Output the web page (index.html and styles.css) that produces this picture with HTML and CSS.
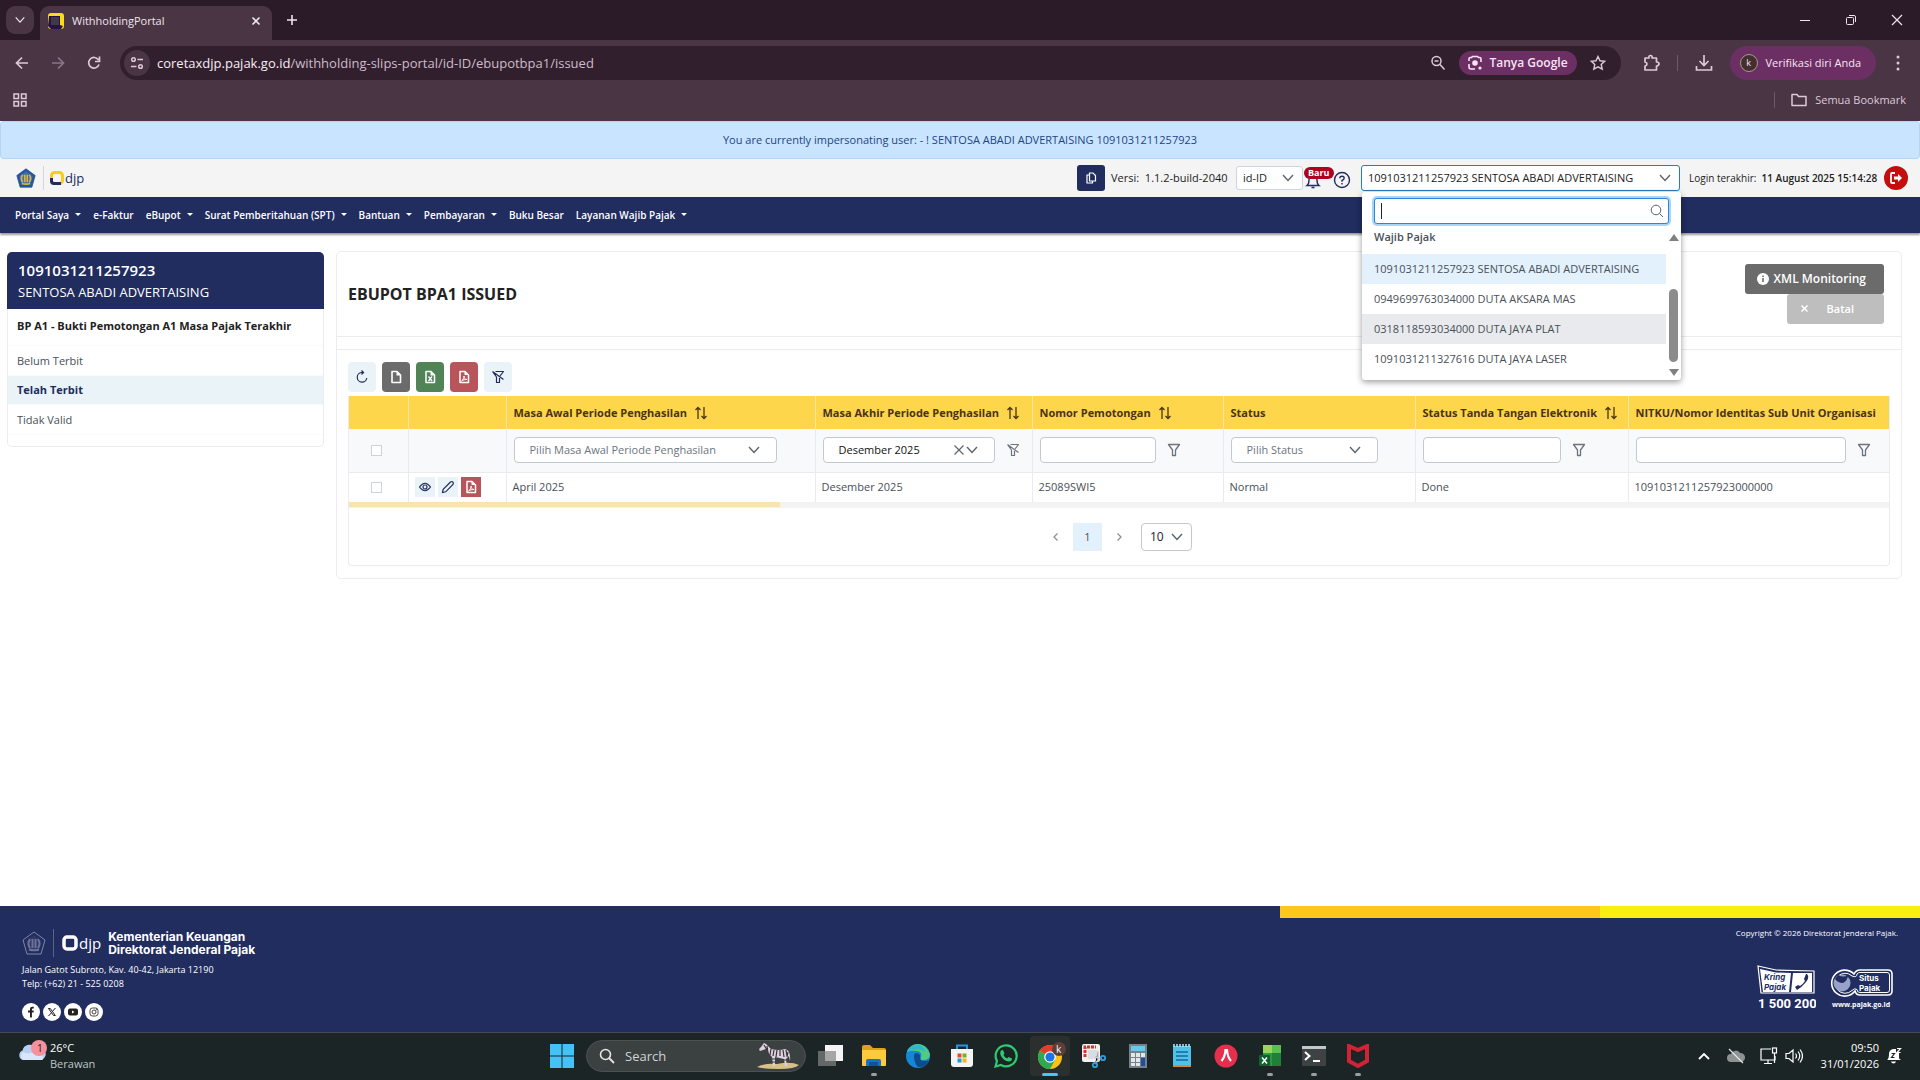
FILE: index.html
```html
<!DOCTYPE html>
<html lang="id">
<head>
    <meta charset="UTF-8">
    <meta name="viewport" content="width=device-width, initial-scale=1.0">
    <title>WithholdingPortal</title>
    <link rel="stylesheet" href="styles.css">
</head>
<body>
    <!-- shared icons -->
    <svg class="sprite" aria-hidden="true">
        <symbol id="chevron" viewBox="0 0 14 14"><path d="M2 4l5 5.500 5-5.500" fill="none" stroke="currentColor" stroke-width="1.400"/></symbol>
        <symbol id="funnel" viewBox="0 0 14 14"><path d="M1.500 1.500h11L8.500 7v5.500h-3V7z" fill="none" stroke="currentColor" stroke-width="1.300" stroke-linejoin="round"/></symbol>
        <symbol id="funnel-slash" viewBox="0 0 14 14"><path d="M4.500 1.500h8L9 6M1.500 1.500L5.500 7v5.500h3V8M1.500 1.500l11 8" fill="none" stroke="currentColor" stroke-width="1.200" stroke-linejoin="round"/></symbol>
        <symbol id="sort" viewBox="0 0 14 14"><path d="M4 13V1.500M1.500 4L4 1.500 6.500 4M10 1v11.500M7.500 10l2.500 2.500 2.500-2.500" fill="none" stroke="currentColor" stroke-width="1.300"/></symbol>
        <symbol id="file" viewBox="0 0 14 14"><path d="M3 1.500h5l3.500 3.500v7.500H3z" fill="none" stroke="currentColor" stroke-width="1.600" stroke-linejoin="round"/><path d="M7.500 1.500V5.500h4z" fill="currentColor"/></symbol>
        <symbol id="file-excel" viewBox="0 0 14 14"><path d="M3 1.500h5l3.500 3.500v7.500H3z" fill="none" stroke="currentColor" stroke-width="1.500" stroke-linejoin="round"/><path d="M7.500 1.500V5.500h4z" fill="currentColor"/><path d="M5.500 6.500l3.500 4.500M9 6.500L5.500 11" stroke="currentColor" stroke-width="1.300"/></symbol>
        <symbol id="file-pdf" viewBox="0 0 14 14"><path d="M3 1.500h5l3.500 3.500v7.500H3z" fill="none" stroke="currentColor" stroke-width="1.500" stroke-linejoin="round"/><path d="M7.500 1.500V5h4z" fill="currentColor"/><path d="M4.500 11c2-1.500 2.500-3 2.500-5 0 2 1 3.500 3 3.500-2 0-4 .3-5.500 1.500z" fill="none" stroke="currentColor"/></symbol>
        <symbol id="pentagon" viewBox="0 0 24 24"><path d="M12 1l11 8-4 14H5L1 9z" class="pent-a"/><path d="M12 4l8 6-3 10H7L4 10z" class="pent-b"/><path d="M8 8q-3 5 0 9M10.500 8v9M13.500 8v9M16 8q3 5 0 9M7 18.500c3 1 7 1 10 0" class="pent-c"/></symbol>
    </svg>

    <div class="browser">
        <div class="tabs">
            <button class="tab-search" aria-label="Cari tab"><svg width="12" height="12"><use href="#chevron"/></svg></button>
            <div class="tab">
                <svg class="favicon" width="16" height="16" viewBox="0 0 16 16"><rect width="16" height="16" rx="3" fill="#f8dc18"/><path d="M1 3h11v9l3 1-2 3H3l-3-3z" fill="#24124a"/><rect x="3" y="4" width="8" height="8" fill="#42384a"/></svg>
                <span class="tab-title">WithholdingPortal</span>
                <button class="plain" aria-label="Tutup tab"><svg width="10" height="10" viewBox="0 0 10 10"><path d="M1.500 1.500l7 7M8.500 1.500l-7 7" stroke="currentColor" stroke-width="1.600"/></svg></button>
            </div>
            <button class="plain new-tab" aria-label="Tab baru"><svg width="12" height="12" viewBox="0 0 12 12"><path d="M6 1v10M1 6h10" stroke="currentColor" stroke-width="1.600"/></svg></button>
            <div class="window-buttons">
                <button class="plain" aria-label="Minimize"><svg width="12" height="12" viewBox="0 0 12 12"><path d="M1 6.500h10" stroke="currentColor"/></svg></button>
                <button class="plain" aria-label="Restore"><svg width="12" height="12" viewBox="0 0 12 12" fill="none" stroke="currentColor"><rect x="1.500" y="3.500" width="7" height="7" rx="1"/><path d="M4 1.500h5q1.500 0 1.500 1.500v5"/></svg></button>
                <button class="plain" aria-label="Close"><svg width="12" height="12" viewBox="0 0 12 12"><path d="M1 1l10 10M11 1L1 11" stroke="currentColor" stroke-width="1.200"/></svg></button>
            </div>
        </div>
        <div class="toolbar">
            <button class="plain" aria-label="Kembali"><svg width="16" height="16" viewBox="0 0 16 16"><path d="M14 8H3M8 2.500L2.500 8 8 13.500" fill="none" stroke="currentColor" stroke-width="1.700"/></svg></button>
            <button class="plain dim" aria-label="Maju"><svg width="16" height="16" viewBox="0 0 16 16"><path d="M2 8h11M8 2.500L13.500 8 8 13.500" fill="none" stroke="currentColor" stroke-width="1.700"/></svg></button>
            <button class="plain" aria-label="Muat ulang"><svg width="16" height="16" viewBox="0 0 16 16"><path d="M13 9.500A5.300 5.300 0 1 1 12.500 5M13.500 1.500v5H9" fill="none" stroke="currentColor" stroke-width="1.700"/></svg></button>
            <div class="omnibox">
                <span class="site-info"><svg width="14" height="14" viewBox="0 0 14 14" fill="none" stroke="currentColor" stroke-width="1.500"><circle cx="3.500" cy="3.500" r="1.800"/><path d="M7.500 3.500H13M1 10.500h5.500"/><circle cx="10.500" cy="10.500" r="1.800"/></svg></span>
                <span class="url">coretaxdjp.pajak.go.id<span class="url-path">/withholding-slips-portal/id-ID/ebupotbpa1/issued</span></span>
                <svg width="16" height="16" viewBox="0 0 16 16" fill="none" stroke="currentColor" stroke-width="1.500"><circle cx="6.500" cy="6" r="4.500"/><path d="M4.500 6h4M10 9.500l4.500 5"/></svg>
                <button class="ask"><svg width="16" height="16" viewBox="0 0 16 16" fill="none" stroke="currentColor" stroke-width="1.600"><path d="M2 6V4q0-1.500 1.500-1.500h1l1-1h5l1 1h1Q14 2.500 14 4v3M2 9v3q0 2 2 2h4"/><circle cx="8" cy="8" r="2" fill="currentColor"/><circle cx="13" cy="13" r=".8" fill="currentColor"/></svg>Tanya Google</button>
                <svg width="16" height="16" viewBox="0 0 16 16"><path d="M8 1.500l2 4.300 4.700.5-3.500 3.200 1 4.700L8 11.800l-4.200 2.400 1-4.700L1.300 6.300l4.700-.5z" fill="none" stroke="currentColor" stroke-width="1.400"/></svg>
            </div>
            <svg class="ext" width="18" height="18" viewBox="0 0 18 18"><path d="M3 4h4q-.5-2.500 1.500-2.500T10 4h4.500v4q2.500 0 2.500 1.800T14.500 12v4H3v-4q2-.5 2-2t-2-2z" fill="none" stroke="currentColor" stroke-width="1.700" stroke-linejoin="round"/></svg>
            <span class="divider"></span>
            <svg class="download" width="18" height="18" viewBox="0 0 18 18"><path d="M9 1v10M4.500 7L9 11.500 13.500 7M1.500 12v4h15v-4" fill="none" stroke="currentColor" stroke-width="1.700"/></svg>
            <button class="profile"><span class="avatar">k</span>Verifikasi diri Anda</button>
            <svg class="dots" width="4" height="16" viewBox="0 0 4 16" fill="currentColor"><circle cx="2" cy="2" r="1.500"/><circle cx="2" cy="8" r="1.500"/><circle cx="2" cy="14" r="1.500"/></svg>
        </div>
        <div class="bookmarks">
            <svg width="14" height="14" viewBox="0 0 14 14" fill="none" stroke="currentColor" stroke-width="1.500"><path d="M1 1h4.500v4.500H1zM8.500 1H13v4.500H8.500zM1 8.500h4.500V13H1zM8.500 8.500H13V13H8.500z"/></svg>
            <span class="divider"></span>
            <svg width="16" height="14" viewBox="0 0 16 14"><path d="M1 1.500h5l1.500 2H15v9H1z" fill="none" stroke="currentColor" stroke-width="1.500" stroke-linejoin="round"/></svg>
            <span>Semua Bookmark</span>
        </div>
    </div>

    <div class="notice">You are currently impersonating user: - ! SENTOSA ABADI ADVERTAISING 1091031211257923</div>

    <header class="topbar">
        <svg class="crest" width="20" height="20"><use href="#pentagon"/></svg>
        <span class="logo">
            <svg width="14" height="14" viewBox="0 0 14 14"><rect x="1.500" y="1.500" width="11" height="11" rx="3" fill="none" stroke="#f6cf1c" stroke-width="3"/><path d="M1.500 7v3q0 2.500 2.500 2.500h7" fill="none" stroke="#212c5f" stroke-width="3"/></svg>djp
        </span>
        <button class="copy" aria-label="Salin versi"><svg width="12" height="12" viewBox="0 0 12 12" fill="none" stroke="currentColor" stroke-width="1.200"><path d="M4.500 1h3.500L10.500 3.500V9h-6zM4 3H2v8h5.500V9"/></svg></button>
        <span class="version">Versi:&nbsp; 1.1.2-build-2040</span>
        <span class="select-box lang">
            <select aria-label="Bahasa"><option>id-ID</option></select>
            <svg width="14" height="14"><use href="#chevron"/></svg>
        </span>
        <span class="bell">
            <svg width="16" height="16" viewBox="0 0 16 16"><path d="M2 12.500q2-1.500 2-5.500 0-3.500 4-3.500t4 3.500q0 4 2 5.500zM6.500 14.500h3" fill="none" stroke="#212c5f" stroke-width="1.400"/></svg>
            <b class="badge">Baru</b>
        </span>
        <svg class="help" width="18" height="18" viewBox="0 0 18 18"><circle cx="9" cy="9" r="7.500" fill="none" stroke="#212c5f" stroke-width="1.400"/><path d="M6.800 7.300q0-2.100 2.200-2.100t2.200 1.900Q11.200 8.500 9 9.500v1.200M9 12v1.500" fill="none" stroke="#212c5f" stroke-width="1.400"/></svg>
        <div class="taxpayer">
            <span class="select-box">
                <select aria-label="Wajib Pajak"><option>1091031211257923 SENTOSA ABADI ADVERTAISING</option></select>
                <svg width="14" height="14"><use href="#chevron"/></svg>
            </span>
            <div class="panel">
                <div class="panel-search">
                    <input type="text" aria-label="Cari wajib pajak">
                    <span class="caret"></span>
                    <svg width="14" height="14" viewBox="0 0 14 14"><circle cx="6" cy="6" r="4.800" fill="none" stroke="currentColor"/><path d="M9.500 9.500L13 13" stroke="currentColor"/></svg>
                </div>
                <div class="panel-body">
                    <ul>
                        <li class="group">Wajib Pajak</li>
                        <li class="selected">1091031211257923 SENTOSA ABADI ADVERTAISING</li>
                        <li>0949699763034000 DUTA AKSARA MAS</li>
                        <li class="hover">0318118593034000 DUTA JAYA PLAT</li>
                        <li>1091031211327616 DUTA JAYA LASER</li>
                    </ul>
                    <div class="scroller">
                        <i class="arrow-up"></i>
                        <i class="thumb"></i>
                        <i class="arrow-down"></i>
                    </div>
                </div>
            </div>
        </div>
        <span class="last-login">Login terakhir:&nbsp; <b>11 August 2025 15:14:28</b></span>
        <button class="logout" aria-label="Keluar"><svg width="14" height="14" viewBox="0 0 14 14"><path d="M6 2H3q-1 0-1 1v8q0 1 1 1h3" fill="none" stroke="#fff" stroke-width="1.800"/><path d="M5 5.500h4V3l4 4-4 4V8.500H5z" fill="#fff"/></svg></button>
    </header>

    <nav class="menu">
        <a href="#" class="more">Portal Saya</a>
        <a href="#">e-Faktur</a>
        <a href="#" class="more">eBupot</a>
        <a href="#" class="more">Surat Pemberitahuan (SPT)</a>
        <a href="#" class="more">Bantuan</a>
        <a href="#" class="more">Pembayaran</a>
        <a href="#">Buku Besar</a>
        <a href="#" class="more">Layanan Wajib Pajak</a>
    </nav>

    <main>
        <aside>
            <div class="who">
                <b>1091031211257923</b>
                <span>SENTOSA ABADI ADVERTAISING</span>
            </div>
            <h2>BP A1 - Bukti Pemotongan A1 Masa Pajak Terakhir</h2>
            <div class="side-links">
                <a href="#">Belum Terbit</a>
                <a href="#" class="active">Telah Terbit</a>
                <a href="#">Tidak Valid</a>
            </div>
        </aside>

        <section class="card">
            <div class="card-head">
                <h1>EBUPOT BPA1 ISSUED</h1>
                <div class="actions">
                    <button class="btn"><svg width="12" height="12" viewBox="0 0 12 12"><circle cx="6" cy="6" r="6" fill="#fff"/><path d="M6 2.500v1.500M6 5v4" stroke="#6b6b6b" stroke-width="1.600"/></svg>XML Monitoring</button>
                    <button class="btn cancel" disabled><svg width="12" height="12" viewBox="0 0 12 12"><path d="M2.500 2.500l6 6M8.500 2.500l-6 6" stroke="#fff" stroke-width="1.600"/></svg>Batal</button>
                </div>
            </div>
            <div class="card-body">
                <div class="tools">
                    <button class="tool" aria-label="Muat ulang"><svg width="14" height="14" viewBox="0 0 14 14"><path d="M8 2.500H6.500A4.800 4.800 0 1 0 11.800 8M6.500.5l2 2-2 2" fill="none" stroke="currentColor" stroke-width="1.200"/></svg></button>
                    <button class="tool gray" aria-label="Ekspor"><svg width="14" height="14"><use href="#file"/></svg></button>
                    <button class="tool green" aria-label="Ekspor Excel"><svg width="14" height="14"><use href="#file-excel"/></svg></button>
                    <button class="tool red" aria-label="Ekspor PDF"><svg width="14" height="14"><use href="#file-pdf"/></svg></button>
                    <button class="tool" aria-label="Hapus filter"><svg width="14" height="14"><use href="#funnel-slash"/></svg></button>
                </div>
                <div class="grid">
                    <table>
                        <colgroup>
                            <col class="c-check"><col class="c-action"><col class="c-start"><col class="c-end"><col class="c-number"><col class="c-status"><col class="c-sign"><col>
                        </colgroup>
                        <thead>
                            <tr class="titles">
                                <th></th>
                                <th></th>
                                <th>Masa Awal Periode Penghasilan<svg width="14" height="14"><use href="#sort"/></svg></th>
                                <th>Masa Akhir Periode Penghasilan<svg width="14" height="14"><use href="#sort"/></svg></th>
                                <th>Nomor Pemotongan<svg width="14" height="14"><use href="#sort"/></svg></th>
                                <th>Status</th>
                                <th>Status Tanda Tangan Elektronik<svg width="14" height="14"><use href="#sort"/></svg></th>
                                <th>NITKU/Nomor Identitas Sub Unit Organisasi</th>
                            </tr>
                            <tr class="filters">
                                <td class="check"><input type="checkbox" aria-label="Pilih semua"></td>
                                <td></td>
                                <td><div class="filter"><span class="select-box w-start"><select aria-label="Masa awal"><option>Pilih Masa Awal Periode Penghasilan</option></select><svg width="14" height="14"><use href="#chevron"/></svg></span></div></td>
                                <td><div class="filter"><span class="select-box w-end filled"><select aria-label="Masa akhir"><option>Desember 2025</option></select><svg class="clear" width="12" height="12" viewBox="0 0 12 12"><path d="M1.500 1.500l9 9M10.500 1.500l-9 9" stroke="currentColor" stroke-width="1.200"/></svg><svg width="14" height="14"><use href="#chevron"/></svg></span><svg width="14" height="14"><use href="#funnel-slash"/></svg></div></td>
                                <td><div class="filter"><input type="text" class="w-number" aria-label="Nomor pemotongan"><svg width="14" height="14"><use href="#funnel"/></svg></div></td>
                                <td><div class="filter"><span class="select-box w-status"><select aria-label="Status"><option>Pilih Status</option></select><svg width="14" height="14"><use href="#chevron"/></svg></span></div></td>
                                <td><div class="filter"><input type="text" class="w-sign" aria-label="Status tanda tangan"><svg width="14" height="14"><use href="#funnel"/></svg></div></td>
                                <td><div class="filter"><input type="text" class="w-nitku" aria-label="NITKU"><svg width="14" height="14"><use href="#funnel"/></svg></div></td>
                            </tr>
                        </thead>
                        <tbody>
                            <tr>
                                <td class="check"><input type="checkbox" aria-label="Pilih baris"></td>
                                <td>
                                    <div class="row-tools">
                                        <button aria-label="Lihat"><svg width="14" height="14" viewBox="0 0 14 14" fill="none" stroke="currentColor" stroke-width="1.200"><path d="M1.500 7Q7-.5 12.500 7 7 14.500 1.500 7z"/><circle cx="7" cy="7" r="2"/></svg></button>
                                        <button aria-label="Ubah"><svg width="14" height="14" viewBox="0 0 14 14"><path d="M1.500 12.500l.7-3.200L9.500 2q1.300-1 2.300 0t.2 2.500l-7.300 7.300z" fill="none" stroke="currentColor" stroke-width="1.200"/></svg></button>
                                        <button class="red" aria-label="PDF"><svg width="14" height="14"><use href="#file-pdf"/></svg></button>
                                    </div>
                                </td>
                                <td>April 2025</td>
                                <td>Desember 2025</td>
                                <td>25089SWI5</td>
                                <td>Normal</td>
                                <td>Done</td>
                                <td>1091031211257923000000</td>
                            </tr>
                        </tbody>
                    </table>
                    <div class="hscroll"><i></i></div>
                    <div class="pager">
                        <button class="plain" aria-label="Sebelumnya"><svg width="8" height="10" viewBox="0 0 8 10"><path d="M5.500 1.500L2 5l3.500 3.500" fill="none" stroke="currentColor" stroke-width="1.300"/></svg></button>
                        <button class="page">1</button>
                        <button class="plain" aria-label="Berikutnya"><svg width="8" height="10" viewBox="0 0 8 10"><path d="M2.500 1.500L6 5 2.500 8.500" fill="none" stroke="currentColor" stroke-width="1.300"/></svg></button>
                        <span class="select-box size"><select aria-label="Baris per halaman"><option>10</option></select><svg width="14" height="14"><use href="#chevron"/></svg></span>
                    </div>
                </div>
            </div>
        </section>
    </main>

    <footer>
        <div class="stripe"><i></i><i></i></div>
        <div class="foot">
            <div class="office">
                <div class="foot-brand">
                    <svg class="crest" width="24" height="24"><use href="#pentagon"/></svg>
                    <span class="logo">
                        <svg width="16" height="16" viewBox="0 0 16 16"><rect x="2" y="2" width="12" height="12" rx="3" fill="none" stroke="#fff" stroke-width="3.500"/></svg>djp
                    </span>
                    <b>Kementerian Keuangan<br>Direktorat Jenderal Pajak</b>
                </div>
                <p>Jalan Gatot Subroto, Kav. 40-42, Jakarta 12190<br>Telp: (+62) 21 - 525 0208</p>
                <div class="social">
                    <a href="#" aria-label="Facebook"><svg width="18" height="18" viewBox="0 0 18 18"><path d="M8 14.500V9.500H6V7.500h2V6q0-2.300 2.300-2.300h1.500v1.900h-1q-.9 0-.9.900v1h1.900l-.4 2h-1.500v5z" fill="#222"/></svg></a>
                    <a href="#" aria-label="X"><svg width="18" height="18" viewBox="0 0 18 18"><path d="M5.500 5.500h1.800l5 7h-1.800zM12.500 5l-3.100 3.500M8.500 9.700L5.500 13" fill="none" stroke="#222"/></svg></a>
                    <a href="#" aria-label="YouTube"><svg width="18" height="18" viewBox="0 0 18 18"><rect x="4" y="5.500" width="10" height="7" rx="2" fill="#222"/><path d="M8 7.500v3l2.500-1.500z" fill="#fff"/></svg></a>
                    <a href="#" aria-label="Instagram"><svg width="18" height="18" viewBox="0 0 18 18" fill="none" stroke="#444"><rect x="5" y="5" width="8" height="8" rx="2.500"/><circle cx="9" cy="9" r="2"/><circle cx="11.300" cy="6.700" r=".3"/></svg></a>
                </div>
            </div>
            <div class="legal">
                <p>Copyright © 2026 Direktorat Jenderal Pajak.</p>
                <div class="seals">
                    <svg width="60" height="46" viewBox="0 0 60 46">
                        <path d="M2 1l18 4 38 1v22H5z" fill="none" stroke="#fff" stroke-width="1.200"/>
                        <path d="M4 4l16 3.500 15 .5-2 19H7z" fill="#fff"/>
                        <path d="M37 8h19v19H35z" fill="#fff"/>
                        <path d="M51 9q3 3-1 8t-9 8l-2-3 3-2 2 1q3-2 5-5l-1-2 2-5z" fill="#212c5f"/>
                        <text x="8" y="15" class="seal-name dark">Kring</text>
                        <text x="8" y="25" class="seal-name dark">Pajak</text>
                        <text x="2" y="43" class="seal-number">1 500 200</text>
                    </svg>
                    <svg width="66" height="46" viewBox="0 0 66 46">
                        <path d="M26 9q2-4 6-4h28q4 0 4 4v17q0 4-4 4H32q-4 0-5-4a13 13 0 1 1-1-17z" fill="none" stroke="#fff" stroke-width="1.600"/>
                        <path d="M24 11q5 2 5-2 1-1.500 3-1.500h27q2.500 0 2.500 2.500v15q0 2.500-2.500 2.500H32q-3 0-3-3-2-2-5 1A10 10 0 1 1 24 11z" fill="none" stroke="#fff"/>
                        <circle cx="14" cy="18" r="8.500" fill="#98a2c8"/>
                        <path d="M10 10q6 3 10 0 0 5-5 8-5 0-8-4z" fill="#212c5f"/>
                        <text x="31" y="16" class="seal-name">Situs</text>
                        <text x="31" y="26" class="seal-name">Pajak</text>
                        <text x="4" y="42" class="seal-site">www.pajak.go.id</text>
                    </svg>
                </div>
            </div>
        </div>
    </footer>

    <div class="taskbar">
        <div class="weather">
            <svg width="32" height="26" viewBox="0 0 32 26"><path d="M5 20a5 5 0 0 1-.5-9.500A7.500 7.500 0 0 1 18 8a6 6 0 0 1 6 12z" fill="#b9cff2"/><path d="M5 20a5 5 0 0 1 0-8q4 2 8 1t11 2q2 3 0 5z" fill="#d9e5fa"/><circle cx="21" cy="8" r="8" fill="#f5909c"/><text x="19" y="12" class="count">1</text></svg>
            <div class="temp"><span>26°C</span><span class="cond">Berawan</span></div>
        </div>
        <div class="apps">
            <button class="app" aria-label="Start"><svg width="24" height="24" viewBox="0 0 24 24" fill="#44c2f8"><path d="M0 0h11.500v11.500H0zM12.500 0H24v11.500H12.500zM0 12.500h11.500V24H0zM12.500 12.500H24V24H12.500z"/></svg></button>
            <label class="search">
                <svg width="16" height="16" viewBox="0 0 16 16"><circle cx="6.500" cy="6.500" r="5" fill="none" stroke="#e6e6e6" stroke-width="1.600"/><path d="M10 10l5 5" stroke="#e6e6e6" stroke-width="1.800"/></svg>
                <input type="text" placeholder="Search" aria-label="Search">
                <svg width="44" height="28" viewBox="0 0 44 28"><path d="M1 25q8-4 20-3 14-3 22 1-4 4-20 4-16 0-22-2z" fill="#d8c08c"/><path d="M4 9q-2-2 1-4l3-4 2 1 5 5q8 2 14 0 6 1 5 12l-1-5-3 3 1 7h-2l-1-7-9-2v9h-2l-1-9q-3-3-6-8l-3 1z" fill="#ddd3dc"/><path d="M8 3l3 5M11 4l1 7M15 7l-1 6M18 8l-1 6M21 8l-1 7M24 8v6M27 8l1 7M30 8l1 6M32 10l-1 5M16 17h3M16 20h3M28 18h3" stroke="#3b2e3c" stroke-width="1.200"/></svg>
            </label>
            <button class="app" aria-label="Task view"><svg width="26" height="24" viewBox="0 0 26 24"><rect x="8" y="1" width="18" height="16" fill="#f4f4f4"/><rect x="1" y="7" width="18" height="15" fill="#6d7070" opacity=".9"/><rect x="8" y="7" width="11" height="10" fill="#a5a7a7"/></svg></button>
            <button class="app running" aria-label="Explorer"><svg width="24" height="24" viewBox="0 0 24 24"><path d="M0 3q0-2 2-2h6l3 3h11q2 0 2 2v16H0z" fill="#e0a01e"/><path d="M0 6h24v14q0 2-2 2H2q-2 0-2-2z" fill="#fcca3c"/><path d="M4 22v-5q0-2 2-2h11q2 0 2 2v5z" fill="#1673c8"/><path d="M7 18h9v4H7z" fill="#0e549c"/></svg></button>
            <button class="app" aria-label="Edge"><svg width="24" height="24" viewBox="0 0 24 24"><circle cx="12" cy="12" r="12" fill="#1687d4"/><path d="M1 8Q4 0 12 0t12 10q0 6-7 6-3 0-2-2 2-6-4-7Q5 6 1 8z" fill="#4fcb83"/><path d="M1 8Q4 1 11 1t8 7q-6-4-11-2Q4 6 1 8z" fill="#33b5cf"/><path d="M8 12q0-3 3-3 4 1 3 5 0 3 4 3t5-1q-3 8-11 7-4-4-4-11z" fill="#0d4b8c"/></svg></button>
            <button class="app" aria-label="Store"><svg width="24" height="24" viewBox="0 0 24 24"><path d="M7 6V1.500h10V6" fill="none" stroke="#2794e0" stroke-width="2"/><path d="M1 5h22v15q0 3-3 3H4q-3 0-3-3z" fill="#f4f4f4"/><path d="M7.500 9.500h4v4h-4z" fill="#e04e28"/><path d="M12.500 9.500h4v4h-4z" fill="#7aaf2a"/><path d="M7.500 14.500h4v4h-4z" fill="#1e9be0"/><path d="M12.500 14.500h4v4h-4z" fill="#f3b41f"/></svg></button>
            <button class="app" aria-label="WhatsApp"><svg width="24" height="24" viewBox="0 0 24 24"><path d="M1.500 22.500l1.500-5.500a10.500 10.500 0 1 1 4 4z" fill="none" stroke="#2ecb70" stroke-width="2.200"/><path d="M7 6.500l2-.5 1.500 3.500-1 1.500q1 2.500 3.500 3.500l1.500-1.500 3.500 1.500q0 3-3 3-4 0-7-4-3-4-1-7z" fill="#2ecb70"/></svg></button>
            <button class="app running focused" aria-label="Chrome"><svg width="36" height="28" viewBox="-6 0 36 28"><circle cx="12" cy="15" r="12" fill="#fbc116"/><path d="M12 15L1.600 9A12 12 0 0 1 22.400 9z" fill="#e33b2e"/><path d="M12 15L1.600 9A12 12 0 0 0 12 27l5-9z" fill="#2da94f"/><circle cx="12" cy="15" r="5.800" fill="#fff"/><circle cx="12" cy="15" r="4.600" fill="#1a73e8"/><circle cx="21" cy="7" r="7" fill="#5b3f38"/><text x="18" y="11" class="count light">k</text></svg></button>
            <button class="app" aria-label="Snipping tool"><svg width="26" height="26" viewBox="0 0 26 26"><rect x="1" y="1" width="18" height="18" rx="2" fill="#f3f0f0"/><path d="M4 14V4h11" fill="none" stroke="#c83c2c" stroke-width="3" stroke-dasharray="3 1"/><rect x="7" y="7" width="9" height="9" fill="#d8dde4"/><path d="M17 8v9l-3 4M14 14l7 2" stroke="#c6cbd2" stroke-width="1.500"/><circle cx="14" cy="22" r="2.200" fill="none" stroke="#2da0dc" stroke-width="1.800"/><circle cx="22" cy="15" r="2.200" fill="none" stroke="#2da0dc" stroke-width="1.800"/></svg></button>
            <button class="app" aria-label="Calculator"><svg width="18" height="24" viewBox="0 0 18 24"><rect width="18" height="24" fill="#77818c"/><path d="M2 2h14v5H2z" fill="#62c9f0"/><path d="M2 9h4v4H2zM7 9h4v4H7zM12 9h4v4h-4zM2 14h4v4H2zM7 14h4v4H7zM2 19h4v3H2zM7 19h4v3H7z" fill="#e4e6e8"/><path d="M12 14h4v8h-4z" fill="#1f4e9c"/></svg></button>
            <button class="app" aria-label="Notepad"><svg width="20" height="24" viewBox="0 0 20 24"><path d="M1 2h18v20H1z" fill="#50c2ea"/><path d="M2 0v3M5 0v3M8 0v3M11 0v3M14 0v3M17 0v3" stroke="#b8e6f8" stroke-width="1.500"/><path d="M4 8h12M4 12h12M4 16h12" stroke="#17679c" stroke-width="1.600"/><path d="M1 22h18" stroke="#d58a3a" stroke-width="2"/></svg></button>
            <button class="app" aria-label="Anydesk"><svg width="24" height="24" viewBox="0 0 24 24"><circle cx="12" cy="12" r="11.500" fill="#e52f4c"/><path d="M7.500 17Q11 13 11.500 6h1.500q.5 7 4 11" fill="none" stroke="#fff" stroke-width="2.200"/></svg></button>
            <button class="app running" aria-label="Excel"><svg width="22" height="24" viewBox="0 0 22 24"><path d="M4 1h18v21H4z" fill="#2c9a44"/><path d="M4 1h9v8H4z" fill="#9ad65c"/><path d="M13 1h9v8h-9z" fill="#58c04e"/><path d="M13 9h9v13h-9z" fill="#20803a"/><rect y="11" width="11" height="11" rx="1" fill="#11612e"/><path d="M3 13.500l5 6M8 13.500l-5 6" stroke="#fff" stroke-width="1.500"/></svg></button>
            <button class="app running" aria-label="Terminal"><svg width="24" height="20" viewBox="0 0 24 20"><rect width="24" height="20" rx="1" fill="#3e4243"/><path d="M0 0h24v3H0z" fill="#c4c7c8"/><path d="M3 6l4.500 4L3 14M11 15h7" fill="none" stroke="#fff" stroke-width="2"/></svg></button>
            <button class="app running" aria-label="McAfee"><svg width="22" height="24" viewBox="0 0 22 24"><path d="M2 2l9 4 9-4v15l-9 5-9-5z" fill="none" stroke="#d02336" stroke-width="4"/></svg></button>
        </div>
        <div class="tray">
            <svg width="12" height="8" viewBox="0 0 12 8"><path d="M1 7l5-5 5 5" fill="none" stroke="currentColor" stroke-width="1.800"/></svg>
            <svg class="cloud" width="18" height="16" viewBox="0 0 18 16"><path d="M4 14a4 4 0 0 1 0-8 5 5 0 0 1 9-1 4.500 4.500 0 0 1 1 9z" fill="#8f9292"/><path d="M2 1l14 14" stroke="#e6e6e6" stroke-width="1.300"/></svg>
            <svg class="monitor" width="18" height="18" viewBox="0 0 18 18" fill="none" stroke="currentColor" stroke-width="1.200"><path d="M11 2H1v11h14V9M8 13v3M4 16.500h8"/><rect x="12.500" y="1" width="4" height="5"/><path d="M14.500 6v10"/></svg>
            <svg class="sound" width="18" height="16" viewBox="0 0 18 16" fill="none" stroke="currentColor" stroke-width="1.200"><path d="M1 5.500h3l4-3.500v12l-4-3.500H1zM10.500 5.500q2 2.500 0 5M13 3.500q3.500 4.500 0 9M15 1.500q5 6.500 0 13"/></svg>
            <div class="clock">09:50<br>31/01/2026</div>
            <svg width="16" height="18" viewBox="0 0 16 18"><path d="M1 13q2-1 2-6 0-4 4-5h3v4h3v5q0 1 2 2zM5 14.500h5q-.5 2-2.500 2t-2.500-2z" fill="#fff"/><path d="M11 1.500h3.500l-3.500 4h3.500" fill="none" stroke="#fff" stroke-width="1.200"/><path d="M5.500 6.500h3l-3 4h3" fill="none" stroke="#1b2526" stroke-width="1.200"/></svg>
        </div>
    </div>
</body>
</html>
```

FILE: styles.css
```css
* {
    box-sizing: border-box;
}
body {
    margin: 0;
    min-height: 100vh;
    display: flex;
    flex-direction: column;
    font-family: "Open Sans", "Noto Sans", sans-serif;
    font-size: 11px;
    line-height: 16px;
    color: #495057;
    background-color: white;
}
button, input, select {
    font: inherit;
    color: inherit;
}
button {
    padding: 0;
    border: 0;
    display: flex;
    align-items: center;
    justify-content: center;
}
svg {
    flex: none;
    display: block;
}
h1, h2, p, ul {
    margin: 0;
    padding: 0;
}
a {
    color: inherit;
    text-decoration: none;
}
.sprite {
    position: absolute;
    width: 0;
    height: 0;
}
.plain {
    background: none;
}

/* browser frame */
.browser {
    color: #dccad8;
    background-color: #4a3545;
    font-size: 12px;
}
.tabs {
    height: 40px;
    padding: 6px 17px 0 6px;
    display: flex;
    background-color: #2b1a28;
    color: #efe3ec;
}
.tab-search {
    width: 28px;
    height: 28px;
    border-radius: 9px;
    background-color: #4a3545;
}
.tab {
    width: 232px;
    margin-left: 6px;
    padding: 0 11px 4px 8px;
    display: flex;
    align-items: center;
    gap: 8px;
    border-radius: 9px 9px 0 0;
    background-color: #4a3545;
    font-size: 11px;
}
.tab-title {
    flex: 1;
}
.new-tab {
    height: 28px;
    margin-left: 14px;
}
.window-buttons {
    margin-left: auto;
    height: 28px;
    display: flex;
    gap: 34px;
}
.toolbar {
    height: 46px;
    padding: 0 20px 0 14px;
    display: flex;
    align-items: center;
    gap: 20px;
}
.dim {
    color: #8b7686;
}
.omnibox {
    flex: 1;
    height: 34px;
    margin: 0 4px 0 -2px;
    padding: 0 15px 0 4px;
    display: flex;
    align-items: center;
    gap: 13px;
    border-radius: 17px;
    background-color: #321f2e;
}
.site-info {
    width: 26px;
    height: 26px;
    margin-right: -6px;
    display: flex;
    align-items: center;
    justify-content: center;
    border-radius: 50%;
    background-color: #4a3545;
}
.url {
    flex: 1;
    font-size: 13px;
    color: #f7edf4;
}
.url-path {
    color: #cdbcc9;
}
.ask {
    height: 24px;
    padding: 0 9px 0 8px;
    gap: 6px;
    border-radius: 12px;
    background-color: #6b2f64;
    color: #fae3f5;
    font-weight: 600;
}
.divider {
    width: 1px;
    height: 16px;
    background-color: #6f5a6a;
}
.ext, .download {
    margin: 0 -3px;
}
.profile {
    height: 34px;
    padding: 0 15px 0 10px;
    gap: 8px;
    border-radius: 17px;
    background-color: #6b2f64;
    color: #fae3f5;
    font-size: 11px;
}
.avatar {
    width: 18px;
    height: 18px;
    border: 1px solid #a98;
    border-radius: 50%;
    background-color: #43302e;
    font-size: 9px;
    line-height: 16px;
}
.bookmarks {
    height: 35px;
    padding: 0 14px 8px 13px;
    display: flex;
    align-items: center;
    gap: 8px;
    font-size: 11px;
}
.bookmarks .divider {
    margin: 0 8px 0 auto;
}

/* page header */
.notice {
    height: 38px;
    line-height: 36px;
    text-align: center;
    color: #1f4484;
    background-color: #c9e4fe;
    border: 1px solid #b3d6f6;
    border-radius: 3px;
}
.topbar {
    height: 38px;
    padding: 0 12px 0 16px;
    display: flex;
    align-items: center;
    color: #222;
    background-color: #f4f4f4;
}
.crest {
    --shield: #28549c;
    --core: #3d6cae;
    --edge: #28549c;
    --mark: #d8b83a;
}
.pent-a {
    fill: var(--shield);
    stroke: var(--edge);
}
.pent-b {
    fill: var(--core);
}
.pent-c {
    fill: none;
    stroke: var(--mark);
    stroke-width: 2;
}
.logo {
    display: flex;
    align-items: center;
    gap: 1px;
    margin-left: 7px;
    padding-left: 6px;
    border-left: 1px solid #d5d5da;
    line-height: 24px;
    font-size: 13px;
    color: #212c5f;
}
.copy {
    width: 28px;
    height: 26px;
    margin: 0 6px 0 auto;
    border-radius: 3px;
    color: white;
    background-color: #212c5f;
}
.version {
    width: 121px;
    margin-right: 4px;
    white-space: nowrap;
}
.select-box {
    height: 26px;
    position: relative;
    display: flex;
    align-items: center;
    border: 1px solid #ced4da;
    border-radius: 3px;
    background-color: white;
}
.select-box select {
    width: 100%;
    height: 100%;
    padding: 0 28px 0 6px;
    border: 0;
    outline: 0;
    appearance: none;
    background: none;
}
.select-box svg {
    position: absolute;
    right: 7px;
    color: #5c646c;
}
.lang {
    width: 67px;
    height: 24px;
}
.bell {
    position: relative;
    margin: 6px 14px 0 2px;
}
.badge {
    position: absolute;
    left: -1px;
    top: -6px;
    padding: 0 4px;
    border-radius: 6px;
    line-height: 12px;
    font-size: 9px;
    color: white;
    background-color: #b00020;
}
.help {
    margin: 4px 10px 0 -2px;
}
.taxpayer {
    position: relative;
    width: 319px;
}
.taxpayer .select-box {
    border-color: #2a7ac0;
}
.panel {
    position: absolute;
    z-index: 10;
    top: 27px;
    left: 1px;
    width: 319px;
    background-color: white;
    border-radius: 3px;
    box-shadow: 0 2px 6px rgba(0, 0, 0, 0.4);
    color: #495057;
}
.panel-search {
    position: relative;
    margin: 0 12px;
    padding-top: 6px;
}
.panel-search input {
    width: 100%;
    height: 26px;
    display: block;
    padding: 0 28px 0 8px;
    border: 1px solid #2a86d8;
    border-radius: 3px;
    box-shadow: 0 0 0 2px #a6d5fa;
    outline: 0;
}
.panel-search .caret {
    position: absolute;
    left: 7px;
    top: 11px;
    width: 1px;
    height: 16px;
    background-color: #222;
}
.panel-search svg {
    position: absolute;
    right: 5px;
    top: 12px;
    color: #5c646c;
}
.panel-body {
    display: flex;
}
.panel-body ul {
    flex: 1;
    padding-bottom: 6px;
    list-style: none;
}
.panel-body li {
    padding: 0 12px;
    line-height: 30px;
    white-space: nowrap;
}
.panel-body .group {
    font-weight: 600;
    line-height: 26px;
    padding-bottom: 4px;
}
.panel-body .selected {
    background-color: #e3f1fd;
}
.panel-body .hover {
    background-color: #e8eaee;
}
.scroller {
    width: 15px;
    padding: 10px 0 4px;
    display: flex;
    flex-direction: column;
    align-items: center;
}
.arrow-up, .arrow-down {
    border: 5px solid transparent;
    border-top: 0;
    border-bottom: 7px solid #808080;
}
.arrow-down {
    border-top: 7px solid #808080;
    border-bottom: 0;
}
.thumb {
    width: 9px;
    height: 73px;
    margin: auto 0 7px;
    border-radius: 5px;
    background-color: #8b8b8b;
}
.last-login {
    width: 189px;
    margin: 0 6px 0 9px;
    font-size: 10px;
    white-space: nowrap;
}
.last-login b {
    font-weight: 600;
}
.logout {
    width: 24px;
    height: 24px;
    border-radius: 50%;
    background-color: #c40d0d;
}
.menu {
    height: 36px;
    padding: 0 15px;
    display: flex;
    align-items: center;
    gap: 12px;
    color: white;
    font-size: 10px;
    font-weight: 600;
    background-color: #212c5f;
    box-shadow: 0 2px 2px rgba(0, 0, 0, 0.4);
}
.more:after {
    content: '';
    display: inline-block;
    margin-left: 6px;
    vertical-align: 3px;
    border: 3px solid transparent;
    border-top-color: white;
    border-bottom: 0;
}

/* content */
main {
    flex: 1;
    padding: 18px 18px 30px 7px;
    display: flex;
    align-items: flex-start;
    gap: 12px;
}
aside {
    width: 317px;
    border: 1px solid #ececf0;
    border-top: 0;
    border-radius: 5px;
    padding-bottom: 11px;
}
.who {
    display: flex;
    flex-direction: column;
    gap: 2px;
    margin: 1px -1px 0;
    padding: 8px 11px 7px;
    border-radius: 5px 5px 0 0;
    color: white;
    background-color: #212c5f;
    font-size: 13px;
    line-height: 20px;
}
.who b {
    font-size: 15px;
    font-weight: 600;
}
aside h2 {
    padding: 9px 9px 11px;
    font-size: 11px;
    line-height: 16px;
    color: #222;
}
.side-links a {
    display: block;
    padding: 0 9px;
    line-height: 29px;
    border-top: 1px solid #fafafb;
}
.side-links .active {
    font-weight: 700;
    line-height: 28px;
    color: #212c5f;
    background-color: #eaf3f8;
}
.side-links {
    border-bottom: 1px solid #fafafb;
}
.card {
    flex: 1;
    min-width: 0;
    border: 1px solid #ececf0;
    border-radius: 5px;
}
.card-head {
    height: 85px;
    padding: 12px 17px 12px 11px;
    display: flex;
    justify-content: space-between;
    align-items: center;
    border-bottom: 1px solid #ececf0;
}
.card-head h1 {
    font-size: 16px;
    line-height: 22px;
    font-weight: 700;
    color: #222;
}
.actions {
    display: flex;
    flex-direction: column;
    align-items: flex-end;
}
.btn {
    height: 30px;
    padding: 0 18px 0 12px;
    gap: 5px;
    border-radius: 3px;
    color: white;
    background-color: #6b6b6b;
    font-size: 12px;
    font-weight: 600;
}
.cancel {
    gap: 16px;
    padding-right: 30px;
    font-size: 11px;
    background-color: #bebebe;
}
.card-body {
    margin-top: 12px;
    padding: 12px 11px;
    border-top: 1px solid #ececf0;
}
.tools {
    display: flex;
    gap: 6px;
    margin-bottom: 4px;
}
.tool {
    width: 28px;
    height: 30px;
    border-radius: 4px;
    color: #212c5f;
    background-color: #eaf3f8;
}
.tool.gray {
    color: white;
    background-color: #6b6b6b;
}
.tool.green {
    color: white;
    background-color: #508457;
}
.tool.red, .row-tools .red {
    color: white;
    background-color: #b8555b;
}
.grid {
    border: 1px solid #ececf0;
    border-top: 0;
    border-radius: 0 0 4px 4px;
}
table {
    width: 100%;
    table-layout: fixed;
    border-collapse: collapse;
}
.c-check {
    width: 59px;
}
.c-action {
    width: 98px;
}
.c-start {
    width: 309px;
}
.c-end {
    width: 217px;
}
.c-number {
    width: 191px;
}
.c-status {
    width: 192px;
}
.c-sign {
    width: 213px;
}
th, td {
    padding: 0 6px;
    text-align: left;
    white-space: nowrap;
    border-right: 1px solid #e9ecef;
}
th:last-child, td:last-child {
    border-right: 0;
}
.titles th {
    height: 33px;
    padding-left: 7px;
    color: #4a3316;
    background-color: #fed64c;
    border-right-color: #fbe7a0;
}
th svg {
    display: inline-block;
    margin-left: 7px;
    vertical-align: -3px;
}
.filters td {
    height: 43px;
    padding-left: 7px;
    background-color: #f8f9fb;
    border-bottom: 1px solid #e9ecef;
}
.filter {
    display: flex;
    align-items: center;
    gap: 11px;
    color: #6c757d;
}
.filter .select-box, .filter input {
    border-radius: 4px;
    border-color: #c5c8d0;
}
.filter .select-box select {
    padding-left: 15px;
}
.filter .select-box svg {
    right: 15px;
}
.filter .select-box .clear {
    right: 29px;
}
.filled {
    color: #111;
}
.filter input {
    height: 26px;
    border: 1px solid #c5c8d0;
    background-color: white;
}
.w-start {
    width: 263px;
}
.w-end {
    width: 172px;
}
.w-number {
    width: 116px;
}
.w-status {
    width: 147px;
}
.w-sign {
    width: 138px;
}
.w-nitku {
    width: 210px;
}
td.check {
    padding: 0 4px 0 0;
}
.check input {
    display: block;
    width: 11px;
    height: 11px;
    margin: 0 auto;
    appearance: none;
    border: 1px solid #cfd3da;
    background-color: white;
}
tbody td {
    height: 30px;
}
.row-tools {
    display: flex;
    gap: 3px;
}
.row-tools button {
    width: 20px;
    height: 20px;
    color: #212c5f;
    background-color: #eaf3f8;
}
.hscroll {
    height: 6px;
    background-color: #f3f3f3;
}
.hscroll i {
    display: block;
    width: 28%;
    height: 5px;
    background-color: #fbe3b0;
}
.pager {
    height: 57px;
    display: flex;
    align-items: center;
    justify-content: center;
    padding: 0 4px 0 0;
    color: #8a9299;
}
.pager .plain {
    width: 28px;
    height: 28px;
}
.page {
    width: 29px;
    height: 28px;
    margin: 0 3px;
    background-color: #e3f1fd;
    color: #495057;
}
.pager .size {
    width: 51px;
    height: 28px;
    margin-left: 8px;
    border-color: #c5c8d0;
    border-radius: 4px;
    color: #222;
    font-size: 12px;
}
.pager .size select {
    padding: 0 20px 0 8px;
}

/* footer */
footer {
    height: 126px;
    color: white;
    background-color: #212c5f;
}
.stripe {
    width: 33.333%;
    height: 12px;
    margin-left: auto;
    display: flex;
}
.stripe i {
    flex: 1;
    background-color: #fdc71b;
}
.stripe i:last-child {
    background-color: #fbec11;
}
.foot {
    display: flex;
    justify-content: space-between;
    padding: 8px 22px 0;
    font-size: 9px;
}
.office p {
    line-height: 14px;
}
.foot-brand {
    display: flex;
    align-items: center;
    height: 34px;
    margin-bottom: 3px;
}
.foot-brand .crest {
    --shield: none;
    --core: #2e3968;
    --edge: #7f87aa;
    --mark: #6c7499;
}
.foot-brand .logo {
    padding-left: 8px;
    color: white;
    border-color: #59628a;
    line-height: 28px;
    font-size: 15px;
}
.foot-brand b {
    margin-left: 7px;
    font-family: "Inter", sans-serif;
    font-size: 12px;
    line-height: 13px;
}
.social {
    display: flex;
    gap: 3px;
    margin-top: 12px;
}
.social a {
    width: 18px;
    height: 18px;
    border-radius: 50%;
    background-color: white;
}
.legal {
    text-align: right;
    font-size: 8px;
    line-height: 14px;
}
.seals {
    display: flex;
    justify-content: flex-end;
    gap: 12px;
    margin: 25px 4px 0 0;
}
.seal-name {
    font: 700 8px "Inter", sans-serif;
    fill: white;
}
.seal-name.dark {
    font-style: italic;
    fill: #212c5f;
}
.seal-number {
    font: 700 13px "Roboto", sans-serif;
    fill: white;
}
.seal-site {
    font: 700 7px "Open Sans", sans-serif;
    fill: white;
}

/* taskbar */
.taskbar {
    height: 48px;
    padding: 0 18px 2px;
    display: grid;
    grid-template-columns: 1fr auto 1fr;
    align-items: center;
    border-top: 1px solid #454a55;
    color: white;
    background-color: #1b2526;
    font-size: 11px;
}
.weather {
    display: flex;
}
.temp {
    display: flex;
    flex-direction: column;
}
.cond {
    color: #bfc4c4;
}
.count {
    font: 10px "Open Sans", sans-serif;
    fill: #222;
}
.count.light {
    fill: white;
}
.apps {
    display: flex;
    align-items: center;
    gap: 4px;
}
.app {
    width: 40px;
    height: 40px;
    border-radius: 4px;
    position: relative;
    background: none;
}
.focused {
    background-color: #2b302f;
}
.running:after {
    content: '';
    position: absolute;
    bottom: 0;
    left: 17px;
    width: 6px;
    height: 3px;
    border-radius: 2px;
    background-color: #9aa0a0;
}
.focused:after {
    left: 12px;
    width: 16px;
    background-color: #4cc2ff;
}
.search {
    width: 220px;
    height: 32px;
    padding: 0 5px 0 12px;
    display: flex;
    align-items: center;
    gap: 10px;
    border: 1px solid #4c5152;
    border-radius: 16px;
    background-color: #3b4041;
}
.search input {
    flex: 1;
    min-width: 0;
    padding: 0;
    border: 0;
    background: none;
    font-size: 13px;
}
.search input::placeholder {
    color: #d0d4d4;
}
.tray {
    display: flex;
    align-items: center;
    justify-content: flex-end;
    gap: 7px;
}
.tray .cloud {
    margin: 0 8px 0 10px;
}
.clock {
    margin-left: 11px;
    text-align: right;
}
```
